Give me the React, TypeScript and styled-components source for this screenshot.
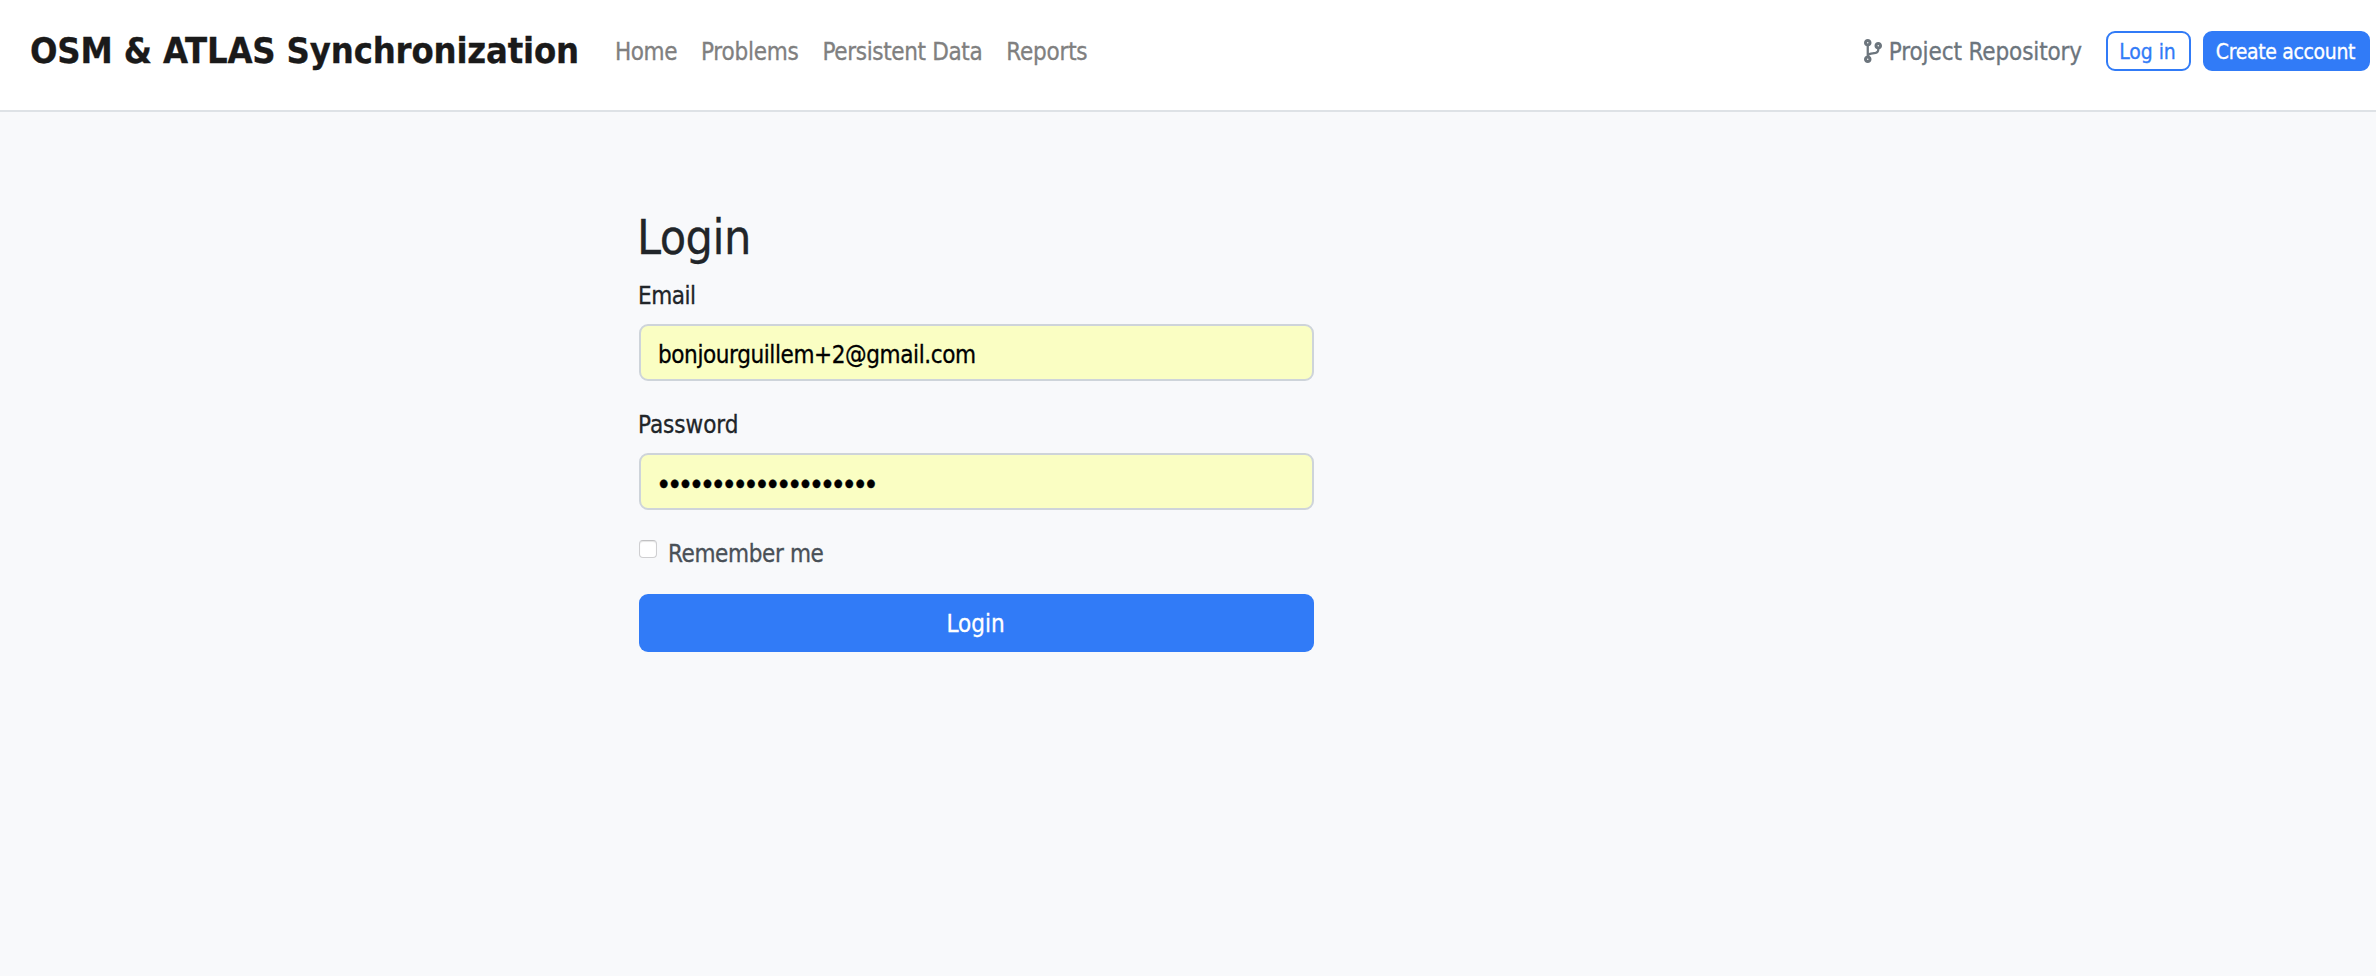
import React from "react";
import styled, { createGlobalStyle } from "styled-components";
import { FaCodeBranch } from "react-icons/fa";

const GlobalStyle = createGlobalStyle`
  *, *::before, *::after { box-sizing: border-box; }
  body {
    margin: 0;
    min-height: 100vh;
    background: #f8f9fb;
    color: #212529;
    font-family: "DejaVu Sans Condensed", "DejaVu Sans", sans-serif;
    font-size: 24px;
    line-height: 36px;
    -webkit-text-stroke: 0.3px currentColor;
  }
`;

interface Tracked {
  $tracking?: number;
}

const Navbar = styled.header`
  display: flex;
  align-items: flex-start;
  height: 112px;
  padding: 24px 6px 0 30px;
  background: #fff;
  border-bottom: 2px solid #dee2e6;
  white-space: nowrap;
`;

const Brand = styled.a`
  margin-right: 36px;
  color: #1a1a1a;
  font-size: 36px;
  font-weight: 700;
  line-height: 54px;
  letter-spacing: -0.16px;
`;

const NavLinks = styled.nav`
  display: flex;
  gap: 24px;
  padding-top: 10px;
`;

const NavLink = styled.a<Tracked>`
  color: #808080;
  letter-spacing: ${(p) => p.$tracking ?? 0}px;
`;

const NavActions = styled.div`
  display: flex;
  gap: 12px;
  margin-left: auto;
  padding-top: 7px;
`;

const RepoLink = styled.a`
  display: flex;
  gap: 7px;
  margin: 3px 12px 0 0;
  color: #6c757d;
  letter-spacing: -0.12px;

  svg {
    width: 18px;
    height: 24px;
    margin-top: 5px;
  }
`;

const SmallButton = styled.button<Tracked & { $filled?: boolean; $width: number }>`
  width: ${(p) => p.$width}px;
  height: 40px;
  padding: 1px 2px 0 0;
  border: 2px solid #317bf7;
  border-radius: 9px;
  background: ${(p) => (p.$filled ? "#317bf7" : "#fff")};
  color: ${(p) => (p.$filled ? "#fff" : "#317bf7")};
  font: 21px/32px "DejaVu Sans Condensed", "DejaVu Sans", sans-serif;
  letter-spacing: ${(p) => p.$tracking ?? 0}px;
  -webkit-text-stroke: inherit;
`;

const LoginForm = styled.form`
  display: flex;
  flex-direction: column;
  width: 675px;
  margin: 96px 0 0 639px;
`;

const Title = styled.h1`
  margin: 0 0 12px -2px;
  font-size: 48px;
  font-weight: 400;
  line-height: 58px;
  letter-spacing: -0.5px;
`;

const Field = styled.div`
  display: flex;
  flex-direction: column;
  gap: 10px;
  margin-bottom: 26px;
`;

const Label = styled.label<Tracked>`
  margin-left: -1px;
  letter-spacing: ${(p) => p.$tracking ?? 0}px;
`;

const Input = styled.input<Tracked>`
  width: 100%;
  height: 57px;
  padding: 4px 18px 0 17px;
  border: 2px solid #ced4da;
  border-radius: 9px;
  outline: none;
  background: #fafec3;
  color: #000;
  font: 24px/36px "DejaVu Sans Condensed", "DejaVu Sans", sans-serif;
  letter-spacing: ${(p) => p.$tracking ?? 0}px;
  -webkit-text-stroke: inherit;
`;

const PasswordInput = styled(Input)`
  padding: 5px 18px 0 15px;
  font-size: 29px;
`;

const RememberRow = styled.label`
  display: flex;
  gap: 11px;
  height: 36px;
  margin-bottom: 22px;
  color: #495057;
  letter-spacing: -0.38px;
`;

const Checkbox = styled.input`
  appearance: none;
  width: 18px;
  height: 18px;
  margin: 4px 0 0;
  border: 1px solid #cfcfd1;
  border-top-color: #c0c0c2;
  border-radius: 4px;
  background: #fff;
  box-shadow: inset 0 1px 1px rgba(0, 0, 0, 0.1);
`;

const SubmitButton = styled.button`
  width: 100%;
  height: 58px;
  padding: 2px 2px 0 0;
  border: 0;
  border-radius: 9px;
  background: #317bf7;
  color: #fff;
  font: 24px/36px "DejaVu Sans Condensed", "DejaVu Sans", sans-serif;
  -webkit-text-stroke: inherit;
`;

const links = [
  { text: "Home", tracking: -0.43 },
  { text: "Problems", tracking: -0.25 },
  { text: "Persistent Data", tracking: -0.35 },
  { text: "Reports", tracking: -0.24 },
];

export default function App() {
  return (
    <>
      <GlobalStyle />
      <Navbar>
        <Brand>OSM &amp; ATLAS Synchronization</Brand>
        <NavLinks>
          {links.map((l) => (
            <NavLink key={l.text} $tracking={l.tracking}>
              {l.text}
            </NavLink>
          ))}
        </NavLinks>
        <NavActions>
          <RepoLink>
            <FaCodeBranch />
            Project Repository
          </RepoLink>
          <SmallButton type="button" $width={85} $tracking={-0.07}>
            Log in
          </SmallButton>
          <SmallButton type="button" $filled $width={167} $tracking={-0.33}>
            Create account
          </SmallButton>
        </NavActions>
      </Navbar>
      <main>
        <LoginForm>
          <Title>Login</Title>
          <Field>
            <Label htmlFor="email" $tracking={-0.48}>Email</Label>
            <Input id="email" $tracking={-0.4} defaultValue="bonjourguillem+2@gmail.com" />
          </Field>
          <Field>
            <Label htmlFor="password" $tracking={-0.04}>Password</Label>
            <PasswordInput
              id="password"
              type="password"
              $tracking={-4.48}
              defaultValue="12345678901234567890"
            />
          </Field>
          <RememberRow>
            <Checkbox type="checkbox" />
            Remember me
          </RememberRow>
          <SubmitButton type="button">Login</SubmitButton>
        </LoginForm>
      </main>
    </>
  );
}
